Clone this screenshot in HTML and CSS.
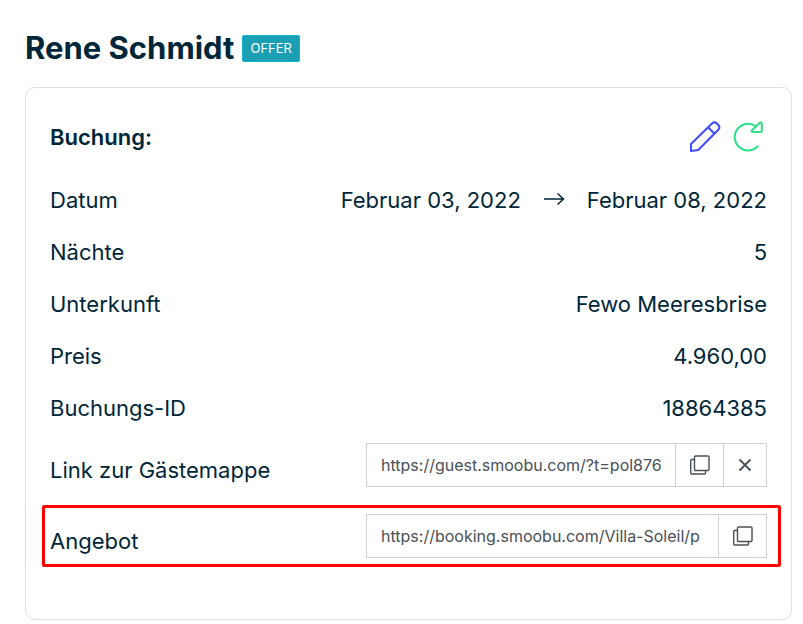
FILE: index.html
```html
<!DOCTYPE html>
<html lang="de">

<head>
    <meta charset="UTF-8">
    <meta name="viewport" content="width=device-width, initial-scale=1.0">
    <title>Buchung</title>
    <link rel="stylesheet" href="styles.css">
</head>

<body>
    <header class="guest">
        <h1>Rene Schmidt</h1>
        <span class="badge">OFFER</span>
    </header>

    <main class="card">
        <div class="card-head">
            <h2>Buchung:</h2>
            <div class="actions">
                <button type="button" class="icon-btn edit" aria-label="Bearbeiten">
                    <svg width="32" height="32" viewBox="0 0 32 32">
                        <path d="M2 30V23L23 2.500Q25.500 .2 28 2.500L29.300 4Q31.500 6.500 29.300 8.800L9.300 29Z" />
                        <path d="M19.300 6.500L25.300 12.500" />
                    </svg>
                </button>
                <button type="button" class="icon-btn reload" aria-label="Neu laden">
                    <svg width="32" height="32" viewBox="0 0 32 32">
                        <path d="M25.500 25.500A13.300 13.300 0 1 1 24 5.500" />
                        <path d="M29.800 3V9.500Q29.800 11 28.300 11H21Q18.500 11 20 9.300L27.800 1.800Q29.800 .8 29.800 3Z" />
                    </svg>
                </button>
            </div>
        </div>

        <dl class="rows">
            <div class="row">
                <dt>Datum</dt>
                <dd class="dates">
                    <span>Februar 03, 2022</span>
                    <svg class="arrow" width="22" height="16" viewBox="0 0 22 16">
                        <path d="M1 7H20.500M14.500 1.500L20.500 7L14.500 12.500" />
                    </svg>
                    <span>Februar 08, 2022</span>
                </dd>
            </div>
            <div class="row">
                <dt>Nächte</dt>
                <dd>5</dd>
            </div>
            <div class="row">
                <dt>Unterkunft</dt>
                <dd>Fewo Meeresbrise</dd>
            </div>
            <div class="row">
                <dt>Preis</dt>
                <dd>4.960,00</dd>
            </div>
            <div class="row">
                <dt>Buchungs-ID</dt>
                <dd>18864385</dd>
            </div>
        </dl>

        <div class="row link-row">
            <label for="guide">Link zur Gästemappe</label>
            <div class="copy-group">
                <input type="text" id="guide" value="https://guest.smoobu.com/?t=pol876" readonly>
                <button type="button" class="copy" aria-label="Kopieren">
                    <svg width="20" height="20" viewBox="0 0 20 20">
                        <rect x="4.500" y="1" width="14.500" height="14.500" rx="1" />
                        <path d="M4.500 4.500H1.500Q.7 4.500 .7 5.500V18Q.7 19 1.500 19H14.500Q15.500 19 15.500 18V16" />
                    </svg>
                </button>
                <button type="button" class="close" aria-label="Entfernen">
                    <svg width="14" height="14" viewBox="0 0 14 14">
                        <path d="M1.500 1.500L12.500 12.500M12.500 1.500L1.500 12.500" />
                    </svg>
                </button>
            </div>
        </div>

        <div class="row link-row highlight">
            <label for="offer">Angebot</label>
            <div class="copy-group">
                <input type="text" id="offer" value="https://booking.smoobu.com/Villa-Soleil/p" readonly>
                <button type="button" class="copy" aria-label="Kopieren">
                    <svg width="20" height="20" viewBox="0 0 20 20">
                        <rect x="4.500" y="1" width="14.500" height="14.500" rx="1" />
                        <path d="M4.500 4.500H1.500Q.7 4.500 .7 5.500V18Q.7 19 1.500 19H14.500Q15.500 19 15.500 18V16" />
                    </svg>
                </button>
            </div>
        </div>
    </main>
</body>

</html>
```
FILE: styles.css
```css
* {
    box-sizing: border-box;
    margin: 0;
    padding: 0;
}

body {
    padding: 24px 11px 4px 25px;
    background: #fff;
    color: #00263a;
    font-family: Inter, "Open Sans", sans-serif;
    font-size: 22px;
    line-height: 34px;
}

svg {
    display: block;
    fill: none;
    stroke: currentColor;
}

button {
    border: 0;
    background: none;
    cursor: pointer;
}

.guest {
    display: flex;
    align-items: center;
    gap: 8px;
    height: 48px;
    margin-bottom: 15px;
}

h1 {
    font-size: 31px;
    font-weight: 700;
}

.badge {
    padding: 0 7px;
    border: 1px solid #10b5cb;
    border-radius: 2px;
    background: #1b9fb5;
    color: #fff;
    font-size: 13px;
    line-height: 25px;
}

.card {
    padding: 24px 24px 52px;
    border: 1px solid #dfdfdf;
    border-radius: 10px;
}

.card-head {
    display: flex;
    align-items: center;
    justify-content: space-between;
    height: 50px;
    margin-bottom: 12px;
}

h2 {
    font-size: 22px;
    font-weight: 600;
}

.actions {
    display: flex;
    gap: 11px;
    padding-right: 3px;
}

.icon-btn svg {
    stroke-width: 2;
    stroke-linejoin: round;
    stroke-linecap: round;
}

.edit {
    color: #3f4dff;
}

.reload {
    color: #2adf85;
}

.row {
    display: flex;
    justify-content: space-between;
    padding: 9px 0;
}

.dates {
    display: flex;
    align-items: center;
    gap: 22px;
}

.arrow {
    stroke-width: 1.5;
}

.link-row {
    align-items: flex-end;
    padding-bottom: 18px;
}

.highlight {
    margin: 0 -14px 0 -8px;
    padding: 6px 11px 6px 5px;
    border: 3px solid #f00;
    border-radius: 2px;
}

.copy-group {
    display: flex;
    width: 401px;
    height: 44px;
    border: 1px solid #ced1da;
    color: #495057;
}

.copy-group input {
    flex: 1;
    min-width: 0;
    border: 0;
    padding: 0 14px;
    outline: 0;
    color: inherit;
    font: 16px Inter, "Open Sans", sans-serif;
}

.copy-group button {
    display: flex;
    align-items: center;
    justify-content: center;
    width: 48px;
    border-left: 1px solid #ced1da;
    color: #495057;
}

.copy-group .close {
    width: 43px;
}

.copy svg {
    stroke-width: 1.4;
}

.close svg {
    stroke-width: 1.8;
}
```
